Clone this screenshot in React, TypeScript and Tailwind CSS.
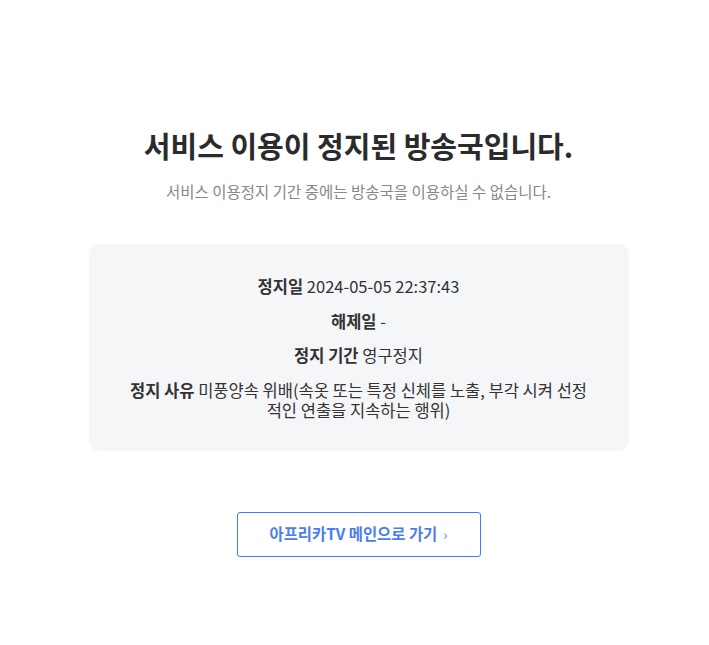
const details = [
  { label: "정지일", value: "2024-05-05 22:37:43" },
  { label: "해제일", value: "-" },
  { label: "정지 기간", value: "영구정지" },
  {
    label: "정지 사유",
    value: "미풍양속 위배(속옷 또는 특정 신체를 노출, 부각 시켜 선정적인 연출을 지속하는 행위)",
  },
];

export default function App() {
  return (
    <div
      className="min-h-screen bg-white pl-2 text-[#333]"
      style={{ fontFamily: '"Noto Sans CJK KR", "Noto Sans", sans-serif' }}
    >
      <main className="mx-auto flex w-[540px] flex-col items-center pt-[126px]">
        <h1 className="text-[29px] font-bold leading-[38px] text-[#2b2b2b]">
          서비스 이용이 정지된 방송국입니다.
        </h1>
        <p className="mt-[17px] text-[15.5px] leading-[20px] text-[#888]">
          서비스 이용정지 기간 중에는 방송국을 이용하실 수 없습니다.
        </p>

        <section className="mt-[43px] flex w-full flex-col gap-[14.5px] rounded-[10px] bg-[#f5f6f8] px-[36px] pb-[31px] pt-[32px] text-center text-[16.5px] leading-[20px]">
          {details.map((item) => (
            <p key={item.label} className="break-all">
              <strong className="font-bold">{item.label}</strong> {item.value}
            </p>
          ))}
        </section>

        <button
          type="button"
          className="mt-[61px] flex h-[45px] w-[244px] items-center justify-center gap-[6px] rounded-[3px] border border-[#4279ff] text-[15.4px] font-bold text-[#4a7df0]"
        >
          아프리카TV 메인으로 가기
          <span className="text-[14px] font-normal">›</span>
        </button>
      </main>
    </div>
  );
}
